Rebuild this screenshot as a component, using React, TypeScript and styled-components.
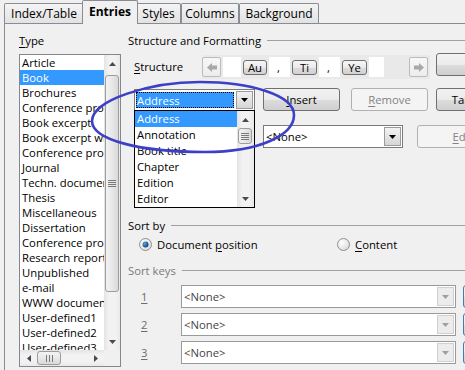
import React from "react";
import styled, { createGlobalStyle } from "styled-components";

const GlobalStyle = createGlobalStyle`
  html, body { margin: 0; padding: 0; background: #f0f0f0; }
  body {
    font-family: "Open Sans", "Noto Sans", Arial, sans-serif;
    font-size: 11.3px;
    color: #000;
  }
  * { box-sizing: border-box; }
  u { text-decoration-thickness: 1px; text-underline-offset: 2px; }
`;

const Window = styled.div`
  position: relative;
  width: 465px;
  height: 370px;
  overflow: hidden;
  background: #f0f0f0;
  display: flex;
  flex-direction: column;
`;

const TabStrip = styled.div`
  display: flex;
  align-items: flex-end;
  height: 23px;
  padding-left: 4px;
  flex: none;
`;

const Tab = styled.div<{ $w: number; $active?: boolean }>`
  position: relative;
  z-index: ${(p) => (p.$active ? 2 : 1)};
  width: ${(p) => p.$w}px;
  height: ${(p) => (p.$active ? 24 : 20)}px;
  margin: 0 ${(p) => (p.$active ? -2 : 0)}px ${(p) => (p.$active ? -1 : 0)}px
    ${(p) => (p.$active ? -2 : 0)}px;
  padding-bottom: ${(p) => (p.$active ? 2 : 0)}px;
  border: 1px solid #898c95;
  border-bottom: none;
  border-radius: 2px 2px 0 0;
  background: ${(p) =>
    p.$active ? "#f0f0f0" : "linear-gradient(#f4f4f4, #ebebeb 50%, #e2e2e2)"};
  font-size: 12px;
  font-weight: ${(p) => (p.$active ? 700 : 400)};
  display: flex;
  align-items: center;
  justify-content: center;
  white-space: nowrap;
`;

const Panel = styled.div`
  flex: 1;
  width: 640px;
  margin-left: 4px;
  border-top: 1px solid #898c95;
  border-left: 1px solid #898c95;
  display: flex;
  align-items: flex-start;
  padding: 9px 0 0 14px;
`;

const LeftCol = styled.div`
  width: 102px;
  flex: none;
  display: flex;
  flex-direction: column;
`;

const FieldLabel = styled.div`
  height: 15px;
  line-height: 15px;
  white-space: nowrap;
`;

const ListBox = styled.div`
  margin-top: 6px;
  width: 102px;
  height: 313px;
  border: 1px solid #828790;
  background: #fff;
  display: grid;
  grid-template-columns: 84px 16px;
  grid-template-rows: 295px 16px;
`;

const ListArea = styled.div`
  overflow: hidden;
`;

const ListItem = styled.div<{ $sel?: boolean; $h?: number }>`
  height: ${(p) => p.$h ?? 15}px;
  line-height: ${(p) => p.$h ?? 15}px;
  padding-left: 2px;
  white-space: nowrap;
  overflow: hidden;
  background: ${(p) => (p.$sel ? "#3399ff" : "transparent")};
  color: ${(p) => (p.$sel ? "#fff" : "#000")};
`;

const VScroll = styled.div`
  display: grid;
  grid-template-rows: 17px 1fr 17px;
  background: linear-gradient(to right, #e4e4e4, #f2f2f2 30%, #f2f2f2 70%, #e9e9e9);
  min-height: 0;
`;

const HScroll = styled.div`
  display: grid;
  grid-template-columns: 17px 1fr 17px;
  background: linear-gradient(#e4e4e4, #f2f2f2 30%, #f2f2f2 70%, #e9e9e9);
`;

const ScrollArrow = styled.div`
  display: flex;
  align-items: center;
  justify-content: center;
`;

const Track = styled.div`
  overflow: hidden;
  min-height: 0;
  display: flex;
`;

const VThumb = styled.div<{ $off: number; $len: number }>`
  margin: ${(p) => p.$off}px 1px 0 1px;
  width: 14px;
  height: ${(p) => p.$len}px;
  border: 1px solid #9c9c9c;
  border-radius: 3px;
  background: linear-gradient(to right, #f3f3f3, #e8e8e8 50%, #d9d9d9);
  display: flex;
  align-items: center;
  justify-content: center;
`;

const HThumb = styled.div<{ $off: number; $len: number }>`
  margin: 1px 0 1px ${(p) => p.$off}px;
  width: ${(p) => p.$len}px;
  height: 14px;
  border: 1px solid #9c9c9c;
  border-radius: 3px;
  background: linear-gradient(#f3f3f3, #e8e8e8 50%, #d9d9d9);
  display: flex;
  align-items: center;
  justify-content: center;
`;

const Corner = styled.div`
  background: #f0f0f0;
`;

const RightCol = styled.div`
  flex: 1;
  margin-left: 7px;
  display: flex;
  flex-direction: column;
  min-width: 0;
`;

const Heading = styled.div<{ $gap?: number; $disabled?: boolean }>`
  display: flex;
  align-items: center;
  height: 15px;
  line-height: 15px;
  margin-top: ${(p) => p.$gap ?? 0}px;
  color: ${(p) => (p.$disabled ? "#7a7a7a" : "#000")};
  white-space: nowrap;
  &::after {
    content: "";
    flex: 1;
    height: 1px;
    background: #a0a0a0;
    margin-left: 6px;
  }
`;

const Row = styled.div<{ $gap: number; $h: number }>`
  display: flex;
  align-items: flex-start;
  margin-top: ${(p) => p.$gap}px;
  height: ${(p) => p.$h}px;
  flex: none;
`;

const RowLabel = styled.div<{ $w: number; $h: number }>`
  width: ${(p) => p.$w}px;
  flex: none;
  padding-left: 6px;
  height: ${(p) => p.$h}px;
  line-height: ${(p) => p.$h}px;
  white-space: nowrap;
  overflow: hidden;
`;

const TokenBar = styled.div`
  width: 228px;
  height: 24px;
  flex: none;
  background: #e9e9e9;
  display: flex;
  align-items: center;
  gap: 2px;
  padding: 0 2px 0 0;
`;

const NavBtn = styled.div<{ $push?: boolean }>`
  width: 19px;
  height: 20px;
  flex: none;
  margin-left: ${(p) => (p.$push ? "auto" : "0")};
  border: 1px solid #bcbcbc;
  border-radius: 2px;
  background: linear-gradient(#f7f7f7, #ececec);
  display: flex;
  align-items: center;
  justify-content: center;
`;

const Slot = styled.div<{ $w: number }>`
  width: ${(p) => p.$w}px;
  height: 20px;
  flex: none;
  background: #fff;
  padding-left: 8px;
  line-height: 22px;
  white-space: pre;
`;

const Token = styled.div<{ $w: number }>`
  width: ${(p) => p.$w}px;
  height: 15px;
  flex: none;
  border: 1px solid #707070;
  border-radius: 3px;
  background: linear-gradient(#f6f6f6, #ebebeb 50%, #dcdcdc 51%, #d2d2d2);
  display: flex;
  align-items: center;
  justify-content: center;
  line-height: 13px;
`;

const PushButton = styled.div<{
  $w: number;
  $ml: number;
  $mt?: number;
  $disabled?: boolean;
  $accent?: boolean;
}>`
  width: ${(p) => p.$w}px;
  height: 23px;
  flex: none;
  margin-left: ${(p) => p.$ml}px;
  margin-top: ${(p) => p.$mt ?? 0}px;
  border: 1px solid
    ${(p) => (p.$accent ? "#3c7fb1" : p.$disabled ? "#adb2b5" : "#707070")};
  border-radius: 3px;
  background: ${(p) =>
    p.$disabled
      ? "#f4f4f4"
      : "linear-gradient(#f2f2f2, #ebebeb 50%, #dddddd 51%, #cfcfcf)"};
  color: ${(p) => (p.$disabled ? "#838383" : "#000")};
  display: flex;
  align-items: center;
  justify-content: center;
  white-space: nowrap;
`;

const ComboWrap = styled.div<{ $ml: number; $mt?: number }>`
  position: relative;
  z-index: 5;
  flex: none;
  margin-left: ${(p) => p.$ml}px;
  margin-top: ${(p) => p.$mt ?? 0}px;
`;

const Combo = styled.div<{ $w: number; $h: number; $disabled?: boolean }>`
  width: ${(p) => p.$w}px;
  height: ${(p) => p.$h}px;
  flex: none;
  border: 1px solid ${(p) => (p.$disabled ? "#9a9a9a" : "#7a7a7a")};
  background: #fff;
  display: flex;
  align-items: stretch;
`;

const ComboText = styled.div<{ $disabled?: boolean }>`
  flex: 1;
  min-width: 0;
  padding-left: 2px;
  display: flex;
  align-items: center;
  white-space: nowrap;
  overflow: hidden;
  color: ${(p) => (p.$disabled ? "#444" : "#000")};
`;

const Selection = styled.div`
  flex: 1;
  min-width: 0;
  margin: 2px 1px 2px 1px;
  padding-left: 1px;
  background: #3399ff;
  color: #fff;
  outline: 1px dotted #000;
  outline-offset: -1px;
  display: flex;
  align-items: center;
  white-space: nowrap;
`;

const DropBtn = styled.div<{ $disabled?: boolean }>`
  width: 17px;
  flex: none;
  margin: 1px;
  border: 1px solid ${(p) => (p.$disabled ? "#d0d0d0" : "#9a9a9a")};
  background: ${(p) =>
    p.$disabled ? "#ececec" : "linear-gradient(#f2f2f2, #e4e4e4 50%, #d6d6d6)"};
  display: flex;
  align-items: center;
  justify-content: center;
`;

const Popup = styled.div`
  position: absolute;
  left: 0;
  top: 21px;
  width: 121px;
  height: 98px;
  border: 1px solid #000;
  background: #fff;
  display: grid;
  grid-template-columns: 1fr 17px;
`;

const RadioRow = styled.div`
  display: flex;
  align-items: center;
  height: 15px;
  margin-top: 4px;
  padding-left: 11px;
  flex: none;
`;

const RadioOption = styled.div<{ $w?: number }>`
  display: flex;
  align-items: center;
  gap: 5px;
  width: ${(p) => (p.$w ? `${p.$w}px` : "auto")};
  white-space: nowrap;
`;

const KeyRow = styled.div<{ $gap: number }>`
  display: flex;
  align-items: center;
  margin-top: ${(p) => p.$gap}px;
  height: 23px;
  padding-left: 13px;
  flex: none;
`;

const KeyLabel = styled.div`
  width: 40px;
  flex: none;
  color: #6d6d6d;
`;

const Overlay = styled.svg`
  position: absolute;
  left: 0;
  top: 0;
  width: 465px;
  height: 370px;
  pointer-events: none;
  z-index: 30;
`;

/* ---------- icons ---------- */

function Tri({ dir, color = "#4a4a4a" }: { dir: "up" | "down" | "left" | "right"; color?: string }) {
  const pts = {
    up: "0,4 7,4 3.5,0",
    down: "0,0 7,0 3.5,4",
    left: "4,0 4,7 0,3.5",
    right: "0,0 0,7 4,3.5",
  }[dir];
  const vert = dir === "up" || dir === "down";
  return (
    <svg width={vert ? 7 : 4} height={vert ? 4 : 7} viewBox={vert ? "0 0 7 4" : "0 0 4 7"}>
      <polygon points={pts} fill={color} />
    </svg>
  );
}

function Grip({ horizontal }: { horizontal?: boolean }) {
  if (horizontal) {
    return (
      <svg width="7" height="7" viewBox="0 0 7 7">
        {[0, 3, 6].map((x) => (
          <rect key={x} x={x} y={0} width={1} height={7} fill="#7a7a7a" />
        ))}
      </svg>
    );
  }
  return (
    <svg width="8" height="7" viewBox="0 0 8 7">
      {[0, 2, 4, 6].map((y) => (
        <rect key={y} x={0} y={y} width={8} height={1} fill="#7a7a7a" />
      ))}
    </svg>
  );
}

function NavArrow({ dir }: { dir: "left" | "right" }) {
  return (
    <svg width="10" height="9" viewBox="0 0 10 9">
      {dir === "left" ? (
        <g fill="#a8a8a8">
          <polygon points="0,4.5 5,0 5,9" />
          <rect x="4" y="2.5" width="6" height="4" />
        </g>
      ) : (
        <g fill="#a8a8a8">
          <polygon points="10,4.5 5,0 5,9" />
          <rect x="0" y="2.5" width="6" height="4" />
        </g>
      )}
    </svg>
  );
}

function Radio({ checked }: { checked?: boolean }) {
  return (
    <svg width="13" height="13" viewBox="0 0 13 13">
      <defs>
        <radialGradient id="rbg" cx="0.35" cy="0.35" r="0.8">
          <stop offset="0" stopColor="#ffffff" />
          <stop offset="1" stopColor="#d6d6d6" />
        </radialGradient>
        <radialGradient id="rdot" cx="0.35" cy="0.35" r="0.7">
          <stop offset="0" stopColor="#5aa6e6" />
          <stop offset="1" stopColor="#0d3e6e" />
        </radialGradient>
      </defs>
      <circle cx="6.5" cy="6.5" r="6" fill="url(#rbg)" stroke="#8e8f8f" strokeWidth="1" />
      {checked && <circle cx="6.5" cy="6.5" r="3" fill="url(#rdot)" />}
    </svg>
  );
}

/* ---------- data ---------- */

const types = [
  "Article",
  "Book",
  "Brochures",
  "Conference proceedings",
  "Book excerpt",
  "Book excerpt with title",
  "Conference proceedings",
  "Journal",
  "Techn. documentation",
  "Thesis",
  "Miscellaneous",
  "Dissertation",
  "Conference proceedings",
  "Research report",
  "Unpublished",
  "e-mail",
  "WWW document",
  "User-defined1",
  "User-defined2",
  "User-defined3",
  "User-defined4",
];

const fields = ["Address", "Annotation", "Book title", "Chapter", "Edition", "Editor"];

function SortKey({ n, gap }: { n: number; gap: number }) {
  return (
    <KeyRow $gap={gap}>
      <KeyLabel>
        <u>{n}</u>
      </KeyLabel>
      <Combo $w={275} $h={23} $disabled>
        <ComboText $disabled>&lt;None&gt;</ComboText>
        <DropBtn $disabled>
          <Tri dir="down" color="#a0a0a0" />
        </DropBtn>
      </Combo>
      <PushButton $w={60} $ml={7} $accent>
        ↑
      </PushButton>
    </KeyRow>
  );
}

export default function App() {
  return (
    <>
      <GlobalStyle />
      <Window>
        <TabStrip>
          <Tab $w={80}>Index/Table</Tab>
          <Tab $w={56} $active>
            Entries
          </Tab>
          <Tab $w={45}>Styles</Tab>
          <Tab $w={58}>Columns</Tab>
          <Tab $w={80}>Background</Tab>
        </TabStrip>

        <Panel>
          <LeftCol>
            <FieldLabel>
              <u>T</u>ype
            </FieldLabel>
            <ListBox>
              <ListArea>
                {types.map((t, i) => (
                  <ListItem key={i} $sel={i === 1}>
                    {t}
                  </ListItem>
                ))}
              </ListArea>
              <VScroll>
                <ScrollArrow>
                  <Tri dir="up" />
                </ScrollArrow>
                <Track>
                  <VThumb $off={3} $len={217}>
                    <Grip />
                  </VThumb>
                </Track>
                <ScrollArrow>
                  <Tri dir="down" />
                </ScrollArrow>
              </VScroll>
              <HScroll>
                <ScrollArrow>
                  <Tri dir="left" />
                </ScrollArrow>
                <Track>
                  <HThumb $off={0} $len={24}>
                    <Grip horizontal />
                  </HThumb>
                </Track>
                <ScrollArrow>
                  <Tri dir="right" />
                </ScrollArrow>
              </HScroll>
              <Corner />
            </ListBox>
          </LeftCol>

          <RightCol>
            <Heading>Structure and Formatting</Heading>

            <Row $gap={7} $h={24}>
              <RowLabel $w={74} $h={24}>
                <u>S</u>tructure
              </RowLabel>
              <TokenBar>
                <NavBtn>
                  <NavArrow dir="left" />
                </NavBtn>
                <Slot $w={18}> </Slot>
                <Token $w={24}>Au</Token>
                <Slot $w={21}>, </Slot>
                <Token $w={25}>Ti</Token>
                <Slot $w={21}>, </Slot>
                <Token $w={25}>Ye</Token>
                <Slot $w={15}> </Slot>
                <NavBtn $push>
                  <NavArrow dir="right" />
                </NavBtn>
              </TokenBar>
              <PushButton $w={77} $ml={6} $mt={-2}>
                All
              </PushButton>
            </Row>

            <Row $gap={9} $h={23}>
              <ComboWrap $ml={6} $mt={1}>
                <Combo $w={121} $h={22}>
                  <Selection>Address</Selection>
                  <DropBtn>
                    <Tri dir="down" color="#000" />
                  </DropBtn>
                </Combo>
                <Popup>
                  <ListArea>
                    {fields.map((f, i) => (
                      <ListItem key={f} $sel={i === 0} $h={16}>
                        {f}
                      </ListItem>
                    ))}
                  </ListArea>
                  <VScroll>
                    <ScrollArrow>
                      <Tri dir="up" />
                    </ScrollArrow>
                    <Track>
                      <VThumb $off={0} $len={16}>
                        <Grip />
                      </VThumb>
                    </Track>
                    <ScrollArrow>
                      <Tri dir="down" />
                    </ScrollArrow>
                  </VScroll>
                </Popup>
              </ComboWrap>
              <PushButton $w={77} $ml={8}>
                <u>I</u>nsert
              </PushButton>
              <PushButton $w={77} $ml={11} $disabled>
                <u>R</u>emove
              </PushButton>
              <PushButton $w={77} $ml={8}>
                Tab stop
              </PushButton>
            </Row>

            <Row $gap={14} $h={23}>
              <RowLabel $w={135} $h={23} />
              <Combo $w={140} $h={23}>
                <ComboText>&lt;None&gt;</ComboText>
                <DropBtn>
                  <Tri dir="down" color="#000" />
                </DropBtn>
              </Combo>
              <PushButton $w={100} $ml={14} $disabled>
                <u>E</u>dit...
              </PushButton>
            </Row>

            <Heading $gap={70}>Sort by</Heading>
            <RadioRow>
              <RadioOption $w={198}>
                <Radio checked />
                <span>
                  Document <u>p</u>osition
                </span>
              </RadioOption>
              <RadioOption>
                <Radio />
                <span>
                  <u>C</u>ontent
                </span>
              </RadioOption>
            </RadioRow>

            <Heading $gap={11} $disabled>
              Sort keys
            </Heading>
            <SortKey n={1} gap={7} />
            <SortKey n={2} gap={5} />
            <SortKey n={3} gap={5} />
          </RightCol>
        </Panel>

        <Overlay viewBox="0 0 465 370">
          <path
            d="M 92 121 C 92 100, 150 82, 200 82 C 250 82, 294 95, 294 115 C 294 135, 260 152, 205 152 C 140 152, 92 140, 92 121 Z"
            fill="none"
            stroke="#3d3fc6"
            strokeWidth="2.6"
          />
        </Overlay>
      </Window>
    </>
  );
}
